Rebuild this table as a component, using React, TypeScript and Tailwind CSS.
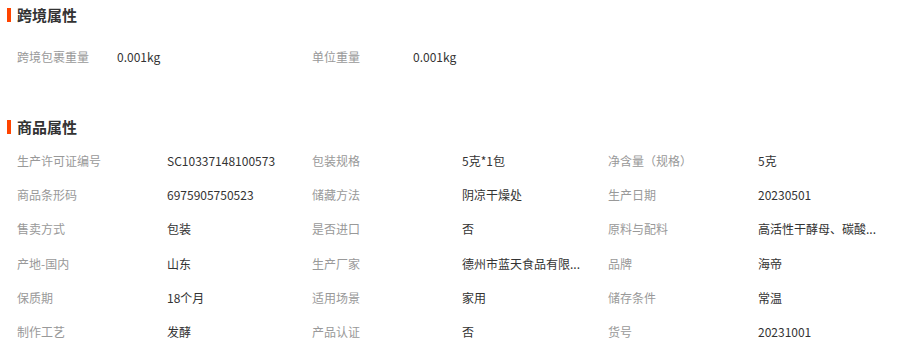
import React from "react";

const font = { fontFamily: '"Noto Sans CJK SC", "Liberation Sans", sans-serif' };

const rows: [string, string, string, string, string, string][] = [
  ["生产许可证编号", "SC10337148100573", "包装规格", "5克*1包", "净含量（规格）", "5克"],
  ["商品条形码", "6975905750523", "储藏方法", "阴凉干燥处", "生产日期", "20230501"],
  ["售卖方式", "包装", "是否进口", "否", "原料与配料", "高活性干酵母、碳酸..."],
  ["产地-国内", "山东", "生产厂家", "德州市蓝天食品有限...", "品牌", "海帝"],
  ["保质期", "18个月", "适用场景", "家用", "储存条件", "常温"],
  ["制作工艺", "发酵", "产品认证", "否", "货号", "20231001"],
];

function Title({ text }: { text: string }) {
  return (
    <div className="flex items-center h-[32px] pl-[7px] pb-[2px]">
      <span className="w-[4px] h-[14px] bg-[#ff4400] mr-[6px]" />
      <span className="text-[15px] font-bold text-[#333]" style={{ lineHeight: "20px" }}>
        {text}
      </span>
    </div>
  );
}

function Cell({ text, label, w }: { text: string; label?: boolean; w: string }) {
  return (
    <div className={`${w} shrink-0 flex items-center`}>
      <span className={`block whitespace-nowrap text-[12px] ${label ? "text-[#999]" : "text-[#333]"}`}>
        {text}
      </span>
    </div>
  );
}

export default function App() {
  return (
    <div className="w-[909px] h-[344px] bg-white overflow-hidden" style={font}>
      <Title text="跨境属性" />
      <div className="flex h-[34px] mt-[8px] pl-[17px] text-[12px]">
        <div className="w-[100px] flex items-center text-[#999]">跨境包裹重量</div>
        <div className="w-[195px] flex items-center text-[#333]">0.001kg</div>
        <div className="w-[101px] flex items-center text-[#999]">单位重量</div>
        <div className="flex items-center text-[#333]">0.001kg</div>
      </div>
      <div className="h-[38px]" />
      <Title text="商品属性" />
      <div className="flex flex-col pl-[17px]">
        {rows.map((r, i) => (
          <div key={i} className="flex h-[34.2px]">
            <Cell text={r[0]} label w="w-[150px]" />
            <Cell text={r[1]} w="w-[145px]" />
            <Cell text={r[2]} label w="w-[150px]" />
            <Cell text={r[3]} w="w-[146px]" />
            <Cell text={r[4]} label w="w-[150px]" />
            <Cell text={r[5]} w="w-[145px]" />
          </div>
        ))}
      </div>
    </div>
  );
}
